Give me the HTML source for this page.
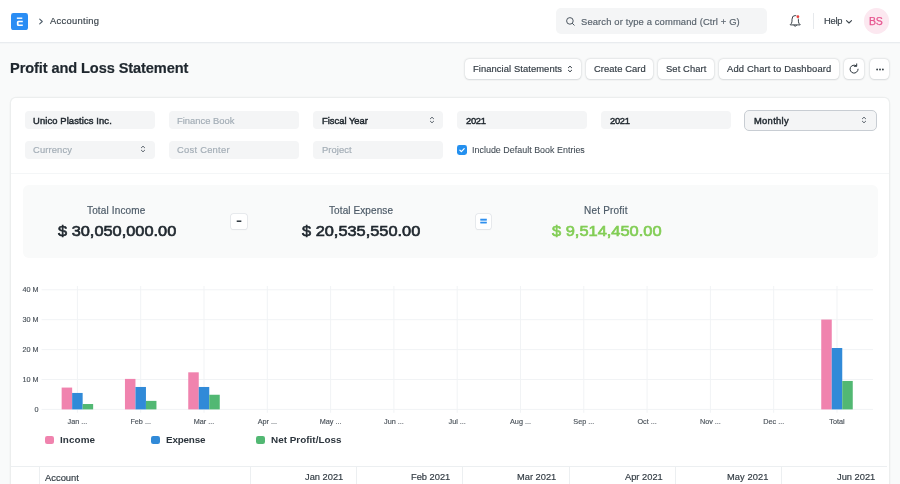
<!DOCTYPE html>
<html lang="en">
<head>
<meta charset="utf-8">
<title>Profit and Loss Statement</title>
<style>
*{box-sizing:border-box;margin:0;padding:0}
html,body{width:900px;height:484px;overflow:hidden}
body{background:#f9fafa;font-family:"Liberation Sans",Arial,sans-serif;color:#1f272e;position:relative;font-size:9.2px}
.abs{position:absolute;white-space:nowrap}
.t{position:absolute;white-space:nowrap;line-height:1;will-change:transform}
.t{-webkit-text-stroke:0.18px currentColor}
.b{-webkit-text-stroke:0}
.med{-webkit-text-stroke:0.45px currentColor}
.navbar{position:absolute;left:0;top:0;width:900px;height:43px;background:#fff;border-bottom:1px solid #e9ecef}
.search{position:absolute;left:556px;top:8px;width:211px;height:26px;border-radius:5px;background:#f4f5f6}
.btn{position:absolute;top:58.5px;height:20.5px;background:#fff;border-radius:4.2px;box-shadow:0 0.7px 1.4px rgba(25,39,52,.08),0 0 2.4px rgba(25,39,52,.20)}
.card{position:absolute;left:10.8px;top:98.2px;width:878.5px;height:420px;background:#fff;border-radius:4.8px;box-shadow:0 0 0 1.3px rgba(25,39,52,.045),0 0 2.5px rgba(25,39,52,.04)}
.inp{position:absolute;height:18px;width:130px;background:#f4f5f6;border-radius:4px}
.ph{color:#a3adb6}
.sum{position:absolute;left:22.5px;top:185px;width:855.5px;height:73px;background:#f9fafa;border-radius:6px}
.op{position:absolute;top:213.8px;width:15.2px;height:15.3px;background:#fff;border-radius:2.6px;box-shadow:0 0 0 0.8px #e2e5e9,0 0.6px 1.2px rgba(25,39,52,.08)}
</style>
</head>
<body>
<!-- NAVBAR -->
<div class="navbar"></div>
<div class="abs" style="left:0;top:43px;width:900px;height:1px;background:#f4f6f7"></div>
<svg class="abs" style="left:11px;top:13px" width="17" height="17" viewBox="0 0 17 17">
  <rect width="17" height="17.1" rx="2.4" fill="#2a8df4"/>
  <rect x="5.85" y="4.5" width="5.45" height="1.4" fill="#fff"/>
  <path d="M11.8 7.8H7.3Q5.85 7.8 5.85 9.3V11.4Q5.85 12.9 7.3 12.9H11.8V11.45H7.6V9.25H11.8Z" fill="#fff"/>
</svg>
<svg class="abs" style="left:38px;top:17px" width="7" height="9" viewBox="0 0 7 9"><path d="M1.7 2.1L4.3 4.5L1.7 6.9" fill="none" stroke="#4c5a67" stroke-width="1.05" stroke-linecap="round" stroke-linejoin="round"/></svg>
<div class="t" id="t_acc" style="left:50px;top:16px;font-size:9.4px;color:#3d464e;letter-spacing:0.3px">Accounting</div>

<div class="search"></div>
<svg class="abs" style="left:565px;top:16px" width="11" height="11" viewBox="0 0 11 11"><circle cx="4.9" cy="4.9" r="3.3" fill="none" stroke="#4c5660" stroke-width="1"/><path d="M7.4 7.4L9.2 9.2" stroke="#4c5660" stroke-width="1" stroke-linecap="round"/></svg>
<div class="t" id="t_search" style="left:581.2px;top:16.5px;font-size:9.4px;color:#5a646e;letter-spacing:0.14px">Search or type a command (Ctrl + G)</div>

<svg class="abs" style="left:788px;top:13px" width="15" height="15" viewBox="0 0 15 15">
  <path d="M2.3 11.9V11.5Q4 10.6 4 8.2V6.3Q4 2.5 7.2 2.5Q10.4 2.5 10.4 6.3V8.2Q10.4 10.6 12.1 11.5V11.9Z" fill="none" stroke="#2f383f" stroke-width="0.95" stroke-linejoin="round"/>
  <path d="M5.9 12.6Q7.2 14.1 8.5 12.6" fill="none" stroke="#2f383f" stroke-width="0.95" stroke-linecap="round"/>
  <circle cx="9.9" cy="3.7" r="2" fill="#fff"/>
  <circle cx="9.9" cy="3.7" r="1.4" fill="#e9423f"/>
</svg>
<div class="abs" style="left:813px;top:12.5px;width:1px;height:16.5px;background:#e6e9ec"></div>
<div class="t" id="t_help" style="left:823.8px;top:16px;font-size:9.4px;color:#3d464e;letter-spacing:-0.3px">Help</div>
<svg class="abs" style="left:845px;top:18px" width="8" height="7" viewBox="0 0 8 7"><path d="M1.5 2.6L4 5L6.5 2.6" fill="none" stroke="#3d464e" stroke-width="1.1" stroke-linecap="round" stroke-linejoin="round"/></svg>
<div class="abs" style="left:863.5px;top:8.3px;width:25.4px;height:25.4px;border-radius:50%;background:#fce8f0"></div>
<div class="t" id="t_bs" style="left:869.4px;top:15.6px;font-size:10.5px;color:#e6558f;-webkit-text-stroke:0.25px currentColor;letter-spacing:-0.2px">BS</div>

<!-- PAGE HEAD -->
<div class="t" id="t_title" style="left:10.2px;top:61.3px;font-size:14.6px;font-weight:bold;color:#1f272e;letter-spacing:-0.1px">Profit and Loss Statement</div>

<div class="btn" style="left:465px;width:116px"></div>
<div class="t" id="t_b1" style="left:473px;top:63.7px;font-size:9.4px;color:#333c44;letter-spacing:0.08px">Financial Statements</div>
<svg class="abs" style="left:566.5px;top:63.75px" width="6" height="10" viewBox="0 0 6 10"><path d="M1.35 3.75L3 2.2L4.65 3.75M1.35 6.25L3 7.8L4.65 6.25" fill="none" stroke="#333c44" stroke-width="1" stroke-linecap="round" stroke-linejoin="round"/></svg>
<div class="btn" style="left:586px;width:66.5px"></div>
<div class="t" id="t_b2" style="left:593.7px;top:63.7px;font-size:9.4px;color:#333c44;letter-spacing:0.07px">Create Card</div>
<div class="btn" style="left:657.8px;width:56.2px"></div>
<div class="t" id="t_b3" style="left:665.8px;top:63.7px;font-size:9.4px;color:#333c44;letter-spacing:0.1px">Set Chart</div>
<div class="btn" style="left:719px;width:120.2px"></div>
<div class="t" id="t_b4" style="left:727px;top:63.7px;font-size:9.4px;color:#333c44;letter-spacing:0.15px">Add Chart to Dashboard</div>
<div class="btn" style="left:844.2px;width:20px"></div>
<svg class="abs" style="left:848.2px;top:62.7px" width="12" height="12" viewBox="0 0 12 12"><path d="M10.1 6.2A4 4 0 1 1 8.3 2.75" fill="none" stroke="#2f383f" stroke-width="1" stroke-linecap="round"/><path d="M8.7 0.9V3.3H6.3" fill="none" stroke="#2f383f" stroke-width="1" stroke-linecap="round" stroke-linejoin="round"/></svg>
<div class="btn" style="left:869.7px;width:19.8px"></div>
<svg class="abs" style="left:874.6px;top:66.5px" width="10" height="5" viewBox="0 0 10 5"><circle cx="2.1" cy="2.5" r="0.9" fill="#2f383f"/><circle cx="5" cy="2.5" r="0.9" fill="#2f383f"/><circle cx="7.9" cy="2.5" r="0.9" fill="#2f383f"/></svg>

<!-- CARD -->
<div class="card"></div>
<div class="inp" style="left:24.5px;top:111.2px"></div>
<div class="inp" style="left:169px;top:111.2px"></div>
<div class="inp" style="left:313px;top:111.2px"></div>
<div class="inp" style="left:457px;top:111.2px"></div>
<div class="inp" style="left:601px;top:111.2px"></div>
<div class="inp" style="left:24.5px;top:140.7px"></div>
<div class="inp" style="left:169px;top:140.7px"></div>
<div class="inp" style="left:313px;top:140.7px"></div>
<div class="abs" style="left:744.2px;top:110px;width:132.4px;height:20.6px;background:#f4f5f6;border-radius:5px;border:1.25px solid #c8cdd3"></div>
<div class="t med" id="t_f1" style="left:33.2px;top:115.6px;font-size:9.4px;color:#1f272e;letter-spacing:0.12px">Unico Plastics Inc.</div>
<div class="t ph" id="t_f2" style="left:177.4px;top:115.6px;font-size:9.4px">Finance Book</div>
<div class="t med" id="t_f3" style="left:321.6px;top:115.6px;font-size:9.4px;color:#1f272e">Fiscal Year</div>
<svg class="abs" style="left:428.65px;top:114.9px" width="6" height="10" viewBox="0 0 6 10"><path d="M1.35 3.75L3 2.2L4.65 3.75M1.35 6.25L3 7.8L4.65 6.25" fill="none" stroke="#4a545d" stroke-width="0.9" stroke-linecap="round" stroke-linejoin="round"/></svg>
<div class="t med" id="t_f4" style="left:465.7px;top:115.6px;font-size:9.4px;color:#1f272e;letter-spacing:-0.3px">2021</div>
<div class="t med" id="t_f5" style="left:609.8px;top:115.6px;font-size:9.4px;color:#1f272e;letter-spacing:-0.3px">2021</div>
<div class="t med" id="t_f6" style="left:753.8px;top:115.6px;font-size:9.4px;color:#1f272e;letter-spacing:0.3px">Monthly</div>
<svg class="abs" style="left:861.25px;top:114.9px" width="6" height="10" viewBox="0 0 6 10"><path d="M1.35 3.75L3 2.2L4.65 3.75M1.35 6.25L3 7.8L4.65 6.25" fill="none" stroke="#4a545d" stroke-width="0.9" stroke-linecap="round" stroke-linejoin="round"/></svg>
<div class="t ph" id="t_f7" style="left:33.2px;top:145.1px;font-size:9.4px;letter-spacing:0.12px">Currency</div>
<svg class="abs" style="left:140.25px;top:144.4px" width="6" height="10" viewBox="0 0 6 10"><path d="M1.35 3.75L3 2.2L4.65 3.75M1.35 6.25L3 7.8L4.65 6.25" fill="none" stroke="#4a545d" stroke-width="0.9" stroke-linecap="round" stroke-linejoin="round"/></svg>
<div class="t ph" id="t_f8" style="left:177.4px;top:145.1px;font-size:9.4px;letter-spacing:0.25px">Cost Center</div>
<div class="t ph" id="t_f9" style="left:321.6px;top:145.1px;font-size:9.4px;letter-spacing:0.08px">Project</div>
<svg class="abs" style="left:457px;top:144.5px" width="10" height="10" viewBox="0 0 10 10"><rect width="10" height="10" rx="2.4" fill="#2490ef"/><path d="M2.9 5.2L4.4 6.6L7.2 3.6" fill="none" stroke="#fff" stroke-width="1.2" stroke-linecap="round" stroke-linejoin="round"/></svg>
<div class="t " id="t_chk" style="left:471.9px;top:146.2px;font-size:8.9px;color:#414b54;-webkit-text-stroke:0.08px currentColor;letter-spacing:0.03px">Include Default Book Entries</div>
<div class="abs" style="left:11px;top:173px;width:878px;height:1px;background:#f4f6f7"></div>
<div class="sum"></div>
<div class="t " id="t_s1l" style="left:87.3px;top:205.5px;font-size:10px;color:#4c5a67;letter-spacing:0.15px">Total Income</div>
<div class="t b" id="t_s1v" style="left:57.7px;top:225.1px;font-size:13.9px;font-weight:normal;color:#1f272e;transform:scaleX(1.178);transform-origin:0 0;-webkit-text-stroke:0.6px currentColor">$ 30,050,000.00</div>
<div class="op" style="left:231.4px"></div>
<div class="t b" id="t_op1" style="left:236.2px;top:214.3px;font-size:13px;font-weight:bold;color:#333c44;transform:scaleX(1.4);transform-origin:0 0">-</div>
<div class="t " id="t_s2l" style="left:329.3px;top:205.5px;font-size:10px;color:#4c5a67;letter-spacing:0.1px">Total Expense</div>
<div class="t b" id="t_s2v" style="left:302.3px;top:225.1px;font-size:13.9px;font-weight:normal;color:#1f272e;transform:scaleX(1.178);transform-origin:0 0;-webkit-text-stroke:0.6px currentColor">$ 20,535,550.00</div>
<div class="op" style="left:476px"></div>
<div class="t b" id="t_op2" style="left:480.2px;top:216.7px;font-size:10.4px;font-weight:bold;color:#2f8fee;-webkit-text-stroke:0.35px currentColor;transform:scaleX(1.17);transform-origin:0 0">=</div>
<div class="t " id="t_s3l" style="left:583.6px;top:205.5px;font-size:10px;color:#4c5a67;letter-spacing:0.2px">Net Profit</div>
<div class="t b" id="t_s3v" style="left:551.8px;top:225.1px;font-size:13.9px;font-weight:normal;color:#82cd55;transform:scaleX(1.182);transform-origin:0 0;-webkit-text-stroke:0.6px currentColor">$ 9,514,450.00</div>
<svg class="abs" style="left:0;top:270px;will-change:transform" width="900" height="190" viewBox="0 270 900 190" font-family="Liberation Sans, Arial, sans-serif">
<line x1="41.6" x2="873" y1="289.8" y2="289.8" stroke="#f1f3f5" stroke-width="1"/>
<text id="y_40" x="38.6" y="292.2" font-size="7.25" fill="#4a525a" stroke="#4a525a" stroke-width="0.15" text-anchor="end">40 M</text>
<line x1="41.6" x2="873" y1="319.7" y2="319.7" stroke="#f1f3f5" stroke-width="1"/>
<text id="y_30" x="38.6" y="322.09999999999997" font-size="7.25" fill="#4a525a" stroke="#4a525a" stroke-width="0.15" text-anchor="end">30 M</text>
<line x1="41.6" x2="873" y1="349.6" y2="349.6" stroke="#f1f3f5" stroke-width="1"/>
<text id="y_20" x="38.6" y="352.0" font-size="7.25" fill="#4a525a" stroke="#4a525a" stroke-width="0.15" text-anchor="end">20 M</text>
<line x1="41.6" x2="873" y1="379.5" y2="379.5" stroke="#f1f3f5" stroke-width="1"/>
<text id="y_10" x="38.6" y="381.9" font-size="7.25" fill="#4a525a" stroke="#4a525a" stroke-width="0.15" text-anchor="end">10 M</text>
<line x1="41.6" x2="873" y1="409.4" y2="409.4" stroke="#f1f3f5" stroke-width="1"/>
<text id="y_0" x="38.6" y="411.79999999999995" font-size="7.25" fill="#4a525a" stroke="#4a525a" stroke-width="0.15" text-anchor="end">0</text>
<line x1="77.4" x2="77.4" y1="286" y2="412.8" stroke="#f1f3f5" stroke-width="1"/>
<text id="x_0" x="77.4" y="423.6" font-size="7.25" fill="#4a525a" stroke="#4a525a" stroke-width="0.15" text-anchor="middle">Jan ...</text>
<line x1="140.7" x2="140.7" y1="286" y2="412.8" stroke="#f1f3f5" stroke-width="1"/>
<text id="x_1" x="140.7" y="423.6" font-size="7.25" fill="#4a525a" stroke="#4a525a" stroke-width="0.15" text-anchor="middle">Feb ...</text>
<line x1="204.0" x2="204.0" y1="286" y2="412.8" stroke="#f1f3f5" stroke-width="1"/>
<text id="x_2" x="204.0" y="423.6" font-size="7.25" fill="#4a525a" stroke="#4a525a" stroke-width="0.15" text-anchor="middle">Mar ...</text>
<line x1="267.3" x2="267.3" y1="286" y2="412.8" stroke="#f1f3f5" stroke-width="1"/>
<text id="x_3" x="267.3" y="423.6" font-size="7.25" fill="#4a525a" stroke="#4a525a" stroke-width="0.15" text-anchor="middle">Apr ...</text>
<line x1="330.6" x2="330.6" y1="286" y2="412.8" stroke="#f1f3f5" stroke-width="1"/>
<text id="x_4" x="330.6" y="423.6" font-size="7.25" fill="#4a525a" stroke="#4a525a" stroke-width="0.15" text-anchor="middle">May ...</text>
<line x1="393.9" x2="393.9" y1="286" y2="412.8" stroke="#f1f3f5" stroke-width="1"/>
<text id="x_5" x="393.9" y="423.6" font-size="7.25" fill="#4a525a" stroke="#4a525a" stroke-width="0.15" text-anchor="middle">Jun ...</text>
<line x1="457.2" x2="457.2" y1="286" y2="412.8" stroke="#f1f3f5" stroke-width="1"/>
<text id="x_6" x="457.2" y="423.6" font-size="7.25" fill="#4a525a" stroke="#4a525a" stroke-width="0.15" text-anchor="middle">Jul ...</text>
<line x1="520.5" x2="520.5" y1="286" y2="412.8" stroke="#f1f3f5" stroke-width="1"/>
<text id="x_7" x="520.5" y="423.6" font-size="7.25" fill="#4a525a" stroke="#4a525a" stroke-width="0.15" text-anchor="middle">Aug ...</text>
<line x1="583.8" x2="583.8" y1="286" y2="412.8" stroke="#f1f3f5" stroke-width="1"/>
<text id="x_8" x="583.8" y="423.6" font-size="7.25" fill="#4a525a" stroke="#4a525a" stroke-width="0.15" text-anchor="middle">Sep ...</text>
<line x1="647.1" x2="647.1" y1="286" y2="412.8" stroke="#f1f3f5" stroke-width="1"/>
<text id="x_9" x="647.1" y="423.6" font-size="7.25" fill="#4a525a" stroke="#4a525a" stroke-width="0.15" text-anchor="middle">Oct ...</text>
<line x1="710.4" x2="710.4" y1="286" y2="412.8" stroke="#f1f3f5" stroke-width="1"/>
<text id="x_10" x="710.4" y="423.6" font-size="7.25" fill="#4a525a" stroke="#4a525a" stroke-width="0.15" text-anchor="middle">Nov ...</text>
<line x1="773.7" x2="773.7" y1="286" y2="412.8" stroke="#f1f3f5" stroke-width="1"/>
<text id="x_11" x="773.7" y="423.6" font-size="7.25" fill="#4a525a" stroke="#4a525a" stroke-width="0.15" text-anchor="middle">Dec ...</text>
<line x1="837.0" x2="837.0" y1="286" y2="412.8" stroke="#f1f3f5" stroke-width="1"/>
<text id="x_12" x="837.0" y="423.6" font-size="7.25" fill="#4a525a" stroke="#4a525a" stroke-width="0.15" text-anchor="middle">Total</text>
<rect x="61.65" y="387.57" width="10.5" height="21.83" fill="#f083ae"/>
<rect x="72.15" y="392.95" width="10.5" height="16.45" fill="#318ad8"/>
<rect x="82.65" y="404.02" width="10.5" height="5.38" fill="#52b873"/>
<rect x="124.95" y="378.90" width="10.5" height="30.50" fill="#f083ae"/>
<rect x="135.45" y="386.97" width="10.5" height="22.43" fill="#318ad8"/>
<rect x="145.95" y="400.88" width="10.5" height="8.52" fill="#52b873"/>
<rect x="188.25" y="372.32" width="10.5" height="37.08" fill="#f083ae"/>
<rect x="198.75" y="386.97" width="10.5" height="22.43" fill="#318ad8"/>
<rect x="209.25" y="394.75" width="10.5" height="14.65" fill="#52b873"/>
<rect x="821.25" y="319.55" width="10.5" height="89.85" fill="#f083ae"/>
<rect x="831.75" y="348.00" width="10.5" height="61.40" fill="#318ad8"/>
<rect x="842.25" y="380.95" width="10.5" height="28.45" fill="#52b873"/>
</svg>
<div class="abs" style="left:45.4px;top:435.8px;width:8.6px;height:8.6px;border-radius:2.2px;background:#f083ae"></div>
<div class="t b" id="t_l0" style="left:60.4px;top:435.1px;font-size:9.9px;font-weight:bold;color:#2c353d;letter-spacing:0.1px">Income</div>
<div class="abs" style="left:151px;top:435.8px;width:8.6px;height:8.6px;border-radius:2.2px;background:#318ad8"></div>
<div class="t b" id="t_l1" style="left:166px;top:435.1px;font-size:9.9px;font-weight:bold;color:#2c353d;letter-spacing:-0.2px">Expense</div>
<div class="abs" style="left:256.4px;top:435.8px;width:8.6px;height:8.6px;border-radius:2.2px;background:#52b873"></div>
<div class="t b" id="t_l2" style="left:271.4px;top:435.1px;font-size:9.9px;font-weight:bold;color:#2c353d;letter-spacing:0.02px">Net Profit/Loss</div>
<div class="abs" style="left:11px;top:465.6px;width:875.5px;height:1px;background:#eceff1"></div>
<div class="abs" style="left:38.8px;top:466px;width:1px;height:20px;background:#eceff1"></div>
<div class="abs" style="left:249.8px;top:466px;width:1px;height:20px;background:#eceff1"></div>
<div class="abs" style="left:356.1px;top:466px;width:1px;height:20px;background:#eceff1"></div>
<div class="abs" style="left:462.4px;top:466px;width:1px;height:20px;background:#eceff1"></div>
<div class="abs" style="left:568.7px;top:466px;width:1px;height:20px;background:#eceff1"></div>
<div class="abs" style="left:675.0px;top:466px;width:1px;height:20px;background:#eceff1"></div>
<div class="abs" style="left:781.3px;top:466px;width:1px;height:20px;background:#eceff1"></div>
<div class="t " id="t_th0" style="left:44.7px;top:473.4px;font-size:9.4px;color:#333c44">Account</div>
<div class="t" id="t_th1" style="right:556.5px;top:473.4px;font-size:9.3px;color:#333c44">Jan 2021</div>
<div class="t" id="t_th2" style="right:450.2px;top:473.4px;font-size:9.3px;color:#333c44">Feb 2021</div>
<div class="t" id="t_th3" style="right:343.9px;top:473.4px;font-size:9.3px;color:#333c44">Mar 2021</div>
<div class="t" id="t_th4" style="right:237.70000000000005px;top:473.4px;font-size:9.3px;color:#333c44">Apr 2021</div>
<div class="t" id="t_th5" style="right:131.29999999999995px;top:473.4px;font-size:9.3px;color:#333c44;letter-spacing:0.1px">May 2021</div>
<div class="t" id="t_th6" style="right:25.200000000000045px;top:473.4px;font-size:9.3px;color:#333c44">Jun 2021</div>
</body>
</html>
